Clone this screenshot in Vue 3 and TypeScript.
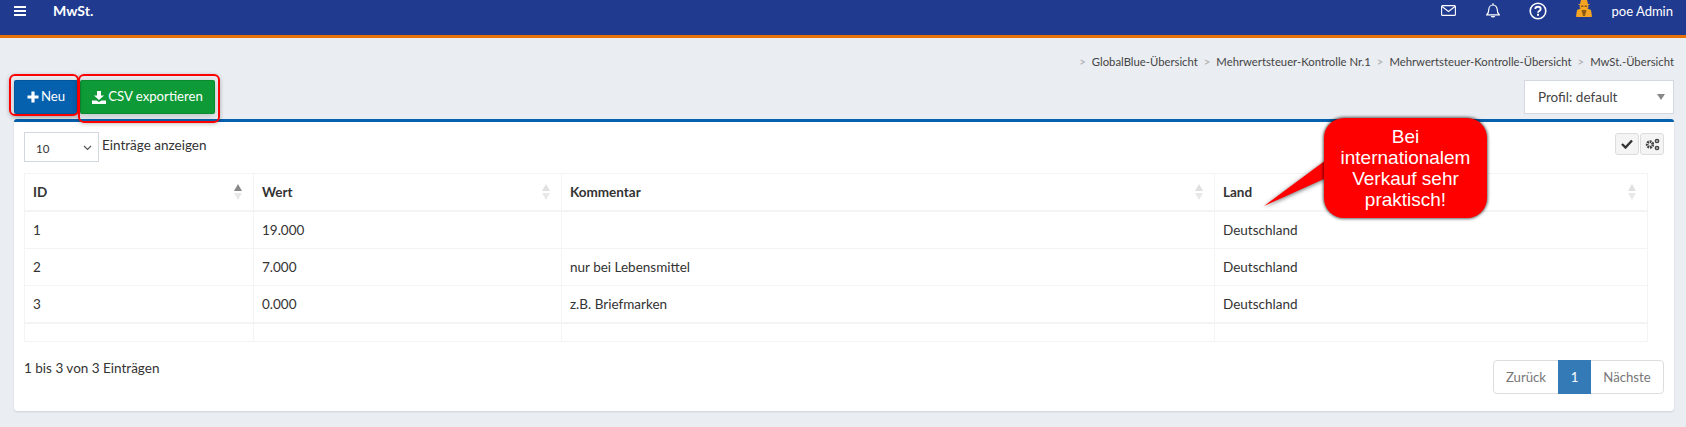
<script setup lang="ts">
const crumbs = ['GlobalBlue-Übersicht', 'Mehrwertsteuer-Kontrolle Nr.1', 'Mehrwertsteuer-Kontrolle-Übersicht', 'MwSt.-Übersicht']
const rows = [
  { id: '1', wert: '19.000', kommentar: '', land: 'Deutschland' },
  { id: '2', wert: '7.000', kommentar: 'nur bei Lebensmittel', land: 'Deutschland' },
  { id: '3', wert: '0.000', kommentar: 'z.B. Briefmarken', land: 'Deutschland' },
]
const cols = ['ID', 'Wert', 'Kommentar', 'Land']
</script>

<template>
  <div class="page">
    <header class="topbar">
      <svg class="burger" width="12" height="10" viewBox="0 0 12 10"><path d="M0 1h12M0 5h12M0 9h12" stroke="#fff" stroke-width="1.800" /></svg>
      <span class="title">MwSt.</span>
      <div class="top-right">
        <svg class="mail" width="15" height="11" viewBox="0 0 15 11" fill="none" stroke="#fff" stroke-width="1.100"><rect x=".6" y=".6" width="13.800" height="9.800" rx="1" /><path d="M1 1.500l6.500 5 6.500-5" /></svg>
        <svg class="bell" width="14" height="15" viewBox="0 0 14 15" fill="none" stroke="#fff" stroke-width="1.200"><path d="M.8 11.800c1.400-1.300 2-2.600 2-5.300C2.800 4 4.600 2 7 2s4.200 2 4.200 4.500c0 2.700.6 4 2 5.300z" /><path d="M7 .3V2M5.400 13c.3 1.200 2.900 1.200 3.200 0" /></svg>
        <svg class="help" width="18" height="18" viewBox="0 0 18 18" fill="none" stroke="#fff"><circle cx="9" cy="9" r="7.800" stroke-width="1.600" /><path d="M6.300 7c0-3 5.400-3 5.400 0 0 2.100-2.700 1.900-2.700 3.800" stroke-width="1.800" /><path d="M9 11.800v2" stroke-width="2" /></svg>
        <svg class="agent" width="16" height="17" viewBox="0 0 16 17"><path d="M5 0h6l1 4h2l-2 1.500.5 1.500-1 1.500L15 10l1 6.500c0 .3-.3.5-1 .5H1c-.7 0-1-.2-1-.5L1 10l3.500-1.500-1-1.500.5-1.500L2 4h2z" fill="#f4a423" /><path d="M5.500 10h5L9 16H7z" fill="#8a5a14" /><path d="M5 5.500h2.500v1.500H5zM8.500 5.500H11v1.500H8.500z" fill="#8a5a14" /></svg>
        <span class="user">poe Admin</span>
      </div>
    </header>

    <nav class="crumbs">
      <template v-for="c in crumbs" :key="c">
        <span class="sep">&gt;</span>
        <span class="crumb">{{ c }}</span>
      </template>
    </nav>

    <div class="toolbar">
      <div class="btns">
        <button class="btn blue">
          <svg width="12" height="12" viewBox="0 0 12 12"><path d="M6 .5v11M.5 6h11" stroke="#fff" stroke-width="3.200" /></svg>
          <span class="btn-text">Neu</span>
        </button>
        <button class="btn green">
          <svg width="14" height="13" viewBox="0 0 14 13" fill="#fff"><path d="M5 0h4v4.500h3L7 9 2 4.500h3zM0 9.500h4.500L7 11l2.500-1.500H14V13H0z" /></svg>
          <span class="btn-text">CSV exportieren</span>
        </button>
        <span class="ring ring-a"></span>
        <span class="ring ring-b"></span>
      </div>
      <div class="profile">
        <span>Profil: default</span>
        <i class="caret"></i>
      </div>
    </div>

    <main class="card">
      <div class="card-top">
        <div class="len">
          <div class="select">
            <span>10</span>
            <svg width="9" height="6" viewBox="0 0 9 6" fill="none"><path d="M1 1l3.500 3.500L8 1" stroke="#555" stroke-width="1.200" /></svg>
          </div>
          <span class="len-label">Einträge anzeigen</span>
        </div>
        <div class="tools">
          <button class="tool">
            <svg width="12" height="10" viewBox="0 0 12 10"><path d="M1 5l3.500 3.500L11 1.500" fill="none" stroke="#333" stroke-width="2.400" /></svg>
          </button>
          <button class="tool">
            <svg width="15" height="13" viewBox="0 0 15 13" fill="none" stroke="#444"><circle cx="5" cy="6.500" r="2.800" stroke-width="2.800" stroke-dasharray="1.800 .7" /><circle cx="12" cy="3" r="1.600" stroke-width="1.500" /><circle cx="12" cy="10" r="1.600" stroke-width="1.500" /></svg>
          </button>
        </div>
      </div>

      <table class="grid">
        <colgroup>
          <col class="c1" /><col class="c2" /><col class="c3" /><col class="c4" />
        </colgroup>
        <thead>
          <tr>
            <th v-for="(c, i) in cols" :key="c">
              {{ c }}
              <span class="sort">
                <i class="up" :class="{ on: i === 0 }"></i>
                <i class="down"></i>
              </span>
            </th>
          </tr>
        </thead>
        <tbody>
          <tr v-for="r in rows" :key="r.id">
            <td>{{ r.id }}</td>
            <td>{{ r.wert }}</td>
            <td>{{ r.kommentar }}</td>
            <td>{{ r.land }}</td>
          </tr>
          <tr class="foot"><td></td><td></td><td></td><td></td></tr>
        </tbody>
      </table>

      <div class="card-bottom">
        <span class="info">1 bis 3 von 3 Einträgen</span>
        <div class="pager">
          <span class="pg prev">Zurück</span>
          <span class="pg active">1</span>
          <span class="pg next">Nächste</span>
        </div>
      </div>
    </main>

    <div class="callout">
      <svg class="tail" width="64" height="52" viewBox="0 0 64 52"><path d="M0 50L62 4v18z" fill="#f00" /></svg>
      <div class="bubble">Bei<br />internationalem<br />Verkauf sehr<br />praktisch!</div>
    </div>
  </div>
</template>

<style>
html, body { margin: 0; background: #eaedf2; }
</style>

<style scoped>
.page {
  position: relative;
  width: 1686px;
  height: 427px;
  overflow: hidden;
  background: #eaedf2;
  font-family: Lato, "Liberation Sans", sans-serif;
  font-size: 13.500px;
  color: #333;
}
.topbar {
  box-sizing: border-box;
  height: 38px;
  background: #1f3a8f;
  border-bottom: 3px solid #e8710a;
  display: flex;
  align-items: flex-start;
  color: #fff;
}
.burger { margin: 6px 0 0 14px; }
.title { margin-left: 27px; line-height: 22px; font-weight: 700; font-size: 14px; }
.top-right { margin-left: auto; display: flex; align-items: flex-start; padding-right: 13px; }
.mail { margin: 5px 30px 0 0; }
.bell { margin: 3px 29px 0 0; }
.help { margin: 2px 29px 0 0; }
.agent { margin: 0 20px 0 0; }
.user { font-size: 13px; line-height: 22px; }
.crumbs {
  display: flex;
  justify-content: flex-end;
  align-items: center;
  height: 18px;
  margin-top: 14px;
  padding-right: 12px;
  font-size: 11.300px;
  color: #444;
}
.sep { margin: 0 6px; color: #aaa; }
.toolbar {
  display: flex;
  justify-content: space-between;
  align-items: flex-start;
  margin-top: 10px;
  padding: 0 12px 0 14px;
}
.btns { position: relative; display: flex; gap: 2px; }
.btn {
  display: flex;
  align-items: center;
  justify-content: center;
  gap: 2px;
  height: 34px;
  border: 1px solid rgba(0, 0, 0, .1);
  border-radius: 2px;
  color: #fff;
  font: inherit;
  font-size: 13.200px;
  padding: 0;
  box-shadow: 0 2px 8px rgba(0, 0, 0, .2);
}
.btn-text { position: relative; top: -1px; }
.blue { width: 64px; background: #0560ad; }
.green { width: 135px; background: #0e9a36; }
.ring { position: absolute; border: 2px solid #f00; border-radius: 6px; box-sizing: border-box; box-shadow: 0 1px 4px rgba(0, 0, 0, .25); }
.ring-a { left: -5px; top: -6px; width: 70px; height: 42px; }
.ring-b { left: 64px; top: -6px; width: 142px; height: 49px; }
.profile {
  box-sizing: border-box;
  width: 150px;
  height: 34px;
  background: #fff;
  border: 1px solid #d3d7e0;
  display: flex;
  align-items: center;
  justify-content: space-between;
  padding: 0 8px 0 13px;
  color: #444;
  font-size: 13.500px;
}
.caret { border: 4px solid transparent; border-top: 6px solid #888; border-bottom: 0; width: 0; height: 0; }
.card {
  box-sizing: border-box;
  margin: 5px 12px 0 14px;
  height: 292px;
  background: #fff;
  border-top: 3px solid #0560ad;
  border-radius: 3px;
  box-shadow: 0 1px 2px rgba(0, 0, 0, .12);
  padding: 10px 10px 0;
}
.card-top { display: flex; justify-content: space-between; align-items: flex-start; height: 41px; }
.len { display: flex; align-items: flex-start; gap: 3px; }
.select {
  box-sizing: border-box;
  width: 75px;
  height: 30px;
  border: 1px solid #d2d6de;
  display: flex;
  align-items: center;
  justify-content: space-between;
  padding: 2px 6px 0 11px;
  font-size: 11.500px;
}
.len-label { line-height: 26px; }
.tools { display: flex; gap: 1px; margin-top: 1px; }
.tool {
  box-sizing: border-box;
  width: 24px;
  height: 22px;
  padding: 0;
  background: #f4f4f4;
  border: 1px solid #ddd;
  border-radius: 3px;
  display: flex;
  align-items: center;
  justify-content: center;
}
.grid {
  border-collapse: collapse;
  table-layout: fixed;
  width: 1624px;
  border: 1px solid #f4f4f4;
}
.c1 { width: 229px; }
.c2 { width: 308px; }
.c3 { width: 653px; }
.grid th, .grid td { border: 1px solid #f4f4f4; padding: 0 8px; text-align: left; }
.grid th { height: 36px; font-weight: 700; border-bottom-width: 2px; position: relative; }
.grid td { height: 36px; }
.foot td { height: 17px; border-top-width: 2px; padding: 0; }
.sort { position: absolute; right: 11px; top: 10px; display: flex; flex-direction: column; gap: 2px; }
.sort i { display: block; width: 0; height: 0; border: 4px solid transparent; }
.up { border-top: 0 !important; border-bottom: 7px solid #e0e0e0 !important; }
.up.on { border-bottom-color: #888 !important; }
.down { border-bottom: 0 !important; border-top: 7px solid #e8e8e8 !important; }
.card-bottom { display: flex; justify-content: space-between; align-items: flex-start; margin-top: 18px; }
.info { line-height: 18px; margin-top: -1px; }
.pager { display: flex; height: 34px; border: 1px solid #ddd; border-radius: 4px; box-sizing: border-box; color: #777; font-size: 13.200px; text-align: center; }
.pg { line-height: 32px; }
.prev { width: 64px; }
.next { width: 72px; }
.active { width: 33px; background: #337ab7; color: #fff; margin: -1px 0; line-height: 34px; }
.callout { position: absolute; left: 1324px; top: 118px; }
.tail { position: absolute; left: -60px; top: 38px; filter: drop-shadow(0 1px 2px rgba(0, 0, 0, .6)); }
.bubble {
  position: relative;
  box-sizing: border-box;
  width: 163px;
  height: 100px;
  background: #f00;
  border-radius: 20px;
  color: #fff;
  text-align: center;
  font-family: "Liberation Sans", sans-serif;
  font-size: 19px;
  line-height: 21px;
  padding-top: 8px;
  box-shadow: 0 0 3px 1px rgba(0, 0, 0, .6);
}
</style>
